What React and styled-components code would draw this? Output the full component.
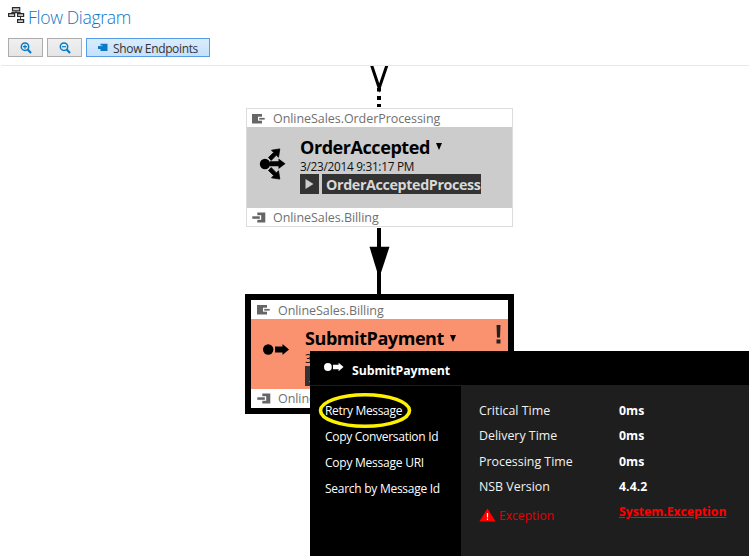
import React from "react";
import styled, { createGlobalStyle } from "styled-components";

const Global = createGlobalStyle`
  * { box-sizing: border-box; }
  body { margin: 0; background: #fff; font-family: "Open Sans", "Noto Sans", sans-serif; }
`;

const Page = styled.div`
  display: flex;
  flex-direction: column;
  width: 749px;
  height: 557px;
  overflow: hidden;
  background: #fff;
`;
const Header = styled.header`
  display: flex;
  align-items: flex-start;
  gap: 3px;
  height: 33px;
  padding-left: 8px;
  svg { margin-top: 7px; }
`;
const Heading = styled.h1`
  margin: 0;
  font-size: 17.6px;
  font-weight: 300;
  line-height: 34px;
  letter-spacing: -0.33px;
  color: #0f75c5;
`;
const Toolbar = styled.div`
  display: flex;
  align-items: center;
  gap: 4px;
  height: 33px;
  margin-left: 1px;
  padding: 5px 0 8px 7px;
  border-bottom: 1px solid #e8e8e8;
`;
const ToolButton = styled.button`
  display: flex;
  align-items: center;
  justify-content: center;
  gap: 5px;
  width: ${(p) => (p.$active ? "124px" : "35px")};
  height: 19px;
  padding: 0;
  font-family: inherit;
  font-size: 12px;
  line-height: 17px;
  letter-spacing: -0.36px;
  color: #333;
  border: 1px solid ${(p) => (p.$active ? "#569de5" : "#acacac")};
  background: ${(p) => (p.$active ? "linear-gradient(#daecfc, #c4e0fc)" : "linear-gradient(#f0f0f0, #e5e5e5)")};
  span { padding-top: 2px; }
`;
const Canvas = styled.main`
  position: relative;
  flex: 1;
`;
const Connector = styled.svg`
  position: absolute;
  left: 365px;
  top: ${(p) => p.$top}px;
`;
const Node = styled.section`
  position: absolute;
  left: ${(p) => (p.$selected ? 245 : 246)}px;
  top: ${(p) => (p.$selected ? 228 : 42)}px;
  display: flex;
  flex-direction: column;
  width: ${(p) => (p.$selected ? 269 : 267)}px;
  height: ${(p) => (p.$selected ? 120 : 119)}px;
  border: ${(p) => (p.$selected ? "6px solid #000" : "1px solid #dcdcdc")};
  background: #fff;
`;
const Endpoint = styled.div`
  display: flex;
  align-items: center;
  gap: 7px;
  height: ${(p) => p.$height || 18}px;
  padding: 2px 0 0 ${(p) => p.$inset || 4}px;
  font-size: 12.5px;
  line-height: 16px;
  letter-spacing: -0.06px;
  color: #707070;
  svg { flex: none; margin-top: -2px; }
`;
const Body = styled.div`
  display: flex;
  flex: none;
  height: ${(p) => (p.$failed ? 70 : 81)}px;
  background: ${(p) => (p.$failed ? "#fa9270" : "#ccc")};
`;
const IconCell = styled.div`
  flex: none;
  width: ${(p) => p.$width}px;
  padding: ${(p) => p.$top}px 0 0 12px;
  svg { display: block; }
`;
const Details = styled.div`
  display: flex;
  flex-direction: column;
  flex: 1;
  padding-top: ${(p) => p.$top}px;
`;
const TitleRow = styled.div`
  display: flex;
  align-items: center;
  gap: 6px;
  height: ${(p) => p.$height}px;
`;
const Title = styled.h2`
  margin: 0;
  font-size: 18px;
  line-height: 26px;
  letter-spacing: -0.43px;
  color: #000;
`;
const Caret = styled.i`
  border: 3.5px solid transparent;
  border-top: 7px solid #000;
  border-bottom: 0;
`;
const Time = styled.div`
  height: 15px;
  font-size: 11.8px;
  line-height: 14px;
  letter-spacing: -0.28px;
  color: #111;
`;
const Saga = styled.div`
  display: flex;
  gap: 3px;
  height: 20px;
`;
const Play = styled.div`
  display: grid;
  place-items: center;
  width: 19px;
  background: #333;
`;
const SagaName = styled.div`
  width: 159px;
  padding: 1px 0 0 4px;
  overflow: hidden;
  white-space: nowrap;
  font-size: 14.3px;
  font-weight: 700;
  line-height: 20px;
  letter-spacing: -0.37px;
  color: #d8d8d8;
  background: #333;
`;
const Alert = styled.svg`
  flex: none;
  margin: 6px 7px 0 0;
`;
const Popup = styled.aside`
  position: absolute;
  left: 310px;
  top: 285px;
  display: flex;
  flex-direction: column;
  width: 439px;
  height: 205px;
  color: #fff;
  background: #000;
`;
const PopupHeader = styled.div`
  display: flex;
  gap: 7px;
  height: 35px;
  padding: 11px 0 0 14px;
  font-size: 12.3px;
  font-weight: 700;
  line-height: 18px;
  letter-spacing: -0.05px;
  border-bottom: 1px solid #1e1e1e;
`;
const PopupBody = styled.div`
  display: flex;
  flex: 1;
`;
const Menu = styled.ul`
  width: 151px;
  margin: 0;
  padding: 12px 0 0 15px;
  list-style: none;
`;
const MenuItem = styled.li`
  height: 26px;
  font-size: 12px;
  line-height: 26px;
  letter-spacing: ${(p) => p.$spacing}px;
`;
const Metrics = styled.dl`
  display: grid;
  grid-template-columns: 140px 1fr;
  grid-template-rows: 25px 26px 25px 25px 26px;
  align-content: start;
  flex: 1;
  margin: 0;
  padding: 12px 0 0 18px;
  background: #1e1e1e;
`;
const Name = styled.dt`
  display: flex;
  gap: 3px;
  padding-top: ${(p) => (p.$error ? 4 : 0)}px;
  font-size: ${(p) => (p.$error ? 12.1 : 12.4)}px;
  line-height: 26px;
  color: ${(p) => (p.$error ? "#e60000" : "#f1f1f1")};
  svg { margin-top: 5px; }
`;
const Value = styled.dd`
  margin: 0;
  font-size: 12.3px;
  font-weight: 700;
  line-height: 26px;
  letter-spacing: ${(p) => (p.$error ? -0.05 : 0.05)}px;
  color: ${(p) => (p.$error ? "#f00" : "#fff")};
  text-decoration: ${(p) => (p.$error ? "underline" : "none")};
`;
const Highlight = styled.svg`
  position: absolute;
  left: 318px;
  top: 325px;
`;

const FlowIcon = () => (
  <svg width="17" height="17" viewBox="0 0 17 17">
    <path d="M8 4v2.500M3.500 7V5.500h9V7M12.500 9v4" fill="none" stroke="#333" />
    <g fill="#ccc" stroke="#2b2b2b" strokeWidth="1.200">
      <path d="M4.500.6h7.200v3.200H4.500zM.6 6.600h6v2.900h-6zM9.600 6.600h6v2.900h-6zM9.600 12.600h6v2.900h-6z" />
    </g>
  </svg>
);
const ZoomIcon = ({ plus }) => (
  <svg width="12" height="12" viewBox="0 0 12 12" fill="none" stroke="#087ac8">
    <circle cx="5" cy="4.700" r="3.700" strokeWidth="1.500" />
    <path d="M7.700 7.500L11 10.900" strokeWidth="2.200" />
    <path d={plus ? "M3 4.700h4M5 2.700v4" : "M3 4.700h4"} strokeWidth="1.200" />
  </svg>
);
const ShowIcon = () => (
  <svg width="10" height="9" viewBox="0 0 10 9">
    <path d="M2.500.7H9.500v7.300h-7V6H0V3h2.500z" fill="#087ac8" />
    <path d="M2 2.700h2.500" fill="none" stroke="#d4e8fb" strokeWidth=".6" />
  </svg>
);
const OutIcon = () => (
  <svg width="15" height="11" viewBox="0 0 15 11">
    <path d="M1 1h10v9.500H1z" fill="#666" />
    <path d="M7 3.700h7v4H7z" fill="#fff" />
    <path d="M8.200 4.900h5.500v1.700H8.200z" fill="#666" />
  </svg>
);
const InIcon = () => (
  <svg width="15" height="11" viewBox="0 0 15 11">
    <path d="M6.300.5h8v10h-8z" fill="#666" />
    <path d="M4 3.200h6.200v4.600H4z" fill="#fff" />
    <path d="M1.300 4.300h7.500v2.500H1.300z" fill="#666" />
  </svg>
);
const EventIcon = () => (
  <svg width="28" height="32" viewBox="0 0 28 32">
    <circle cx="6" cy="16" r="5.200" />
    <path d="M11 13.200h8.500V10.500l7 5.200-7 5.200V18.300H11z" />
    <g stroke="#000" strokeWidth=".8">
      <path d="M9.500 9.500l5.200-5.100-2.200-2.200 8.300-1.300-1.300 8.400-2.100-2.200-5.200 5.300z" />
      <path d="M9.500 22.500l5.200 5.100-2.200 2.200 8.300 1.300-1.300-8.400-2.100 2.200-5.200-5.300z" />
    </g>
  </svg>
);
const CommandIcon = ({ small }) => (
  <svg width={small ? 21 : 28} height={small ? 10 : 13} viewBox="0 0 28 13" preserveAspectRatio="none" fill={small ? "#fff" : "#000"}>
    <circle cx="5.200" cy="6.500" r="5.200" />
    <path d="M12 3.500h7.500V1l6.500 5.500-6.500 5.500V9.500H12z" />
  </svg>
);

export default function App() {
  return (
    <Page>
      <Global />
      <Header><FlowIcon /><Heading>Flow Diagram</Heading></Header>
      <Toolbar>
        <ToolButton aria-label="Zoom in"><ZoomIcon plus /></ToolButton>
        <ToolButton aria-label="Zoom out"><ZoomIcon /></ToolButton>
        <ToolButton $active><ShowIcon /><span>Show Endpoints</span></ToolButton>
      </Toolbar>
      <Canvas>
        <Connector $top={0} width="28" height="42" viewBox="0 0 28 42">
          <path d="M6.500-1l7.700 23L22-1" fill="none" stroke="#000" strokeWidth="3" />
          <path d="M12 22h4v3.500h-4zM12 30h4v4h-4zM12 38h4v3h-4z" />
        </Connector>
        <Connector $top={162} width="28" height="67" viewBox="0 0 28 67">
          <path d="M12 0h4v67h-4z" />
          <path d="M4.500 18.800h20L16.200 44h-4z" />
        </Connector>

        <Node>
          <Endpoint><OutIcon />OnlineSales.OrderProcessing</Endpoint>
          <Body>
            <IconCell $top={21} $width={53}><EventIcon /></IconCell>
            <Details $top={7}>
              <TitleRow $height={25}><Title>OrderAccepted</Title><Caret /></TitleRow>
              <Time>3/23/2014 9:31:17 PM</Time>
              <Saga>
                <Play><svg width="9" height="10"><path d="M.5 0l8 5-8 5z" fill="#ccc" /></svg></Play>
                <SagaName>OrderAcceptedProcess</SagaName>
              </Saga>
            </Details>
          </Body>
          <Endpoint><InIcon />OnlineSales.Billing</Endpoint>
        </Node>

        <Node $selected>
          <Endpoint $height={19} $inset={5}><OutIcon />OnlineSales.Billing</Endpoint>
          <Body $failed>
            <IconCell $top={24} $width={54}><CommandIcon /></IconCell>
            <Details $top={6}>
              <TitleRow $height={26}><Title>SubmitPayment</Title><Caret /></TitleRow>
              <Time>3/23/2014 9:31:17 PM</Time>
              <Saga><Play><svg width="13" height="12"><path d="M1 12l4-4 3 4z" fill="#ccc" /></svg></Play></Saga>
            </Details>
            <Alert width="5" height="19"><path d="M.5 0h4L4 12.500H1zM.5 14.500h4v4h-4z" fill="#222" /></Alert>
          </Body>
          <Endpoint $inset={5}><InIcon />OnlineSales.Billing</Endpoint>
        </Node>

        <Popup>
          <PopupHeader><CommandIcon small />SubmitPayment</PopupHeader>
          <PopupBody>
            <Menu>
              <MenuItem $spacing={-0.33}>Retry Message</MenuItem>
              <MenuItem $spacing={-0.29}>Copy Conversation Id</MenuItem>
              <MenuItem $spacing={-0.24}>Copy Message URI</MenuItem>
              <MenuItem $spacing={-0.27}>Search by Message Id</MenuItem>
            </Menu>
            <Metrics>
              <Name>Critical Time</Name><Value>0ms</Value>
              <Name>Delivery Time</Name><Value>0ms</Value>
              <Name>Processing Time</Name><Value>0ms</Value>
              <Name>NSB Version</Name><Value>4.4.2</Value>
              <Name $error>
                <svg width="17" height="14" viewBox="0 0 17 14">
                  <path d="M8.500.5L16.700 13.500H.3z" fill="#f00" />
                  <path d="M8.500 5v4.500M8.500 10.500v1.500" stroke="#fff" strokeWidth="1.200" />
                </svg>
                Exception
              </Name>
              <Value $error>System.Exception</Value>
            </Metrics>
          </PopupBody>
        </Popup>
        <Highlight width="94" height="38">
          <ellipse cx="47" cy="19.500" rx="44.500" ry="15.800" fill="none" stroke="#fff200" strokeWidth="3.600" />
        </Highlight>
      </Canvas>
    </Page>
  );
}
